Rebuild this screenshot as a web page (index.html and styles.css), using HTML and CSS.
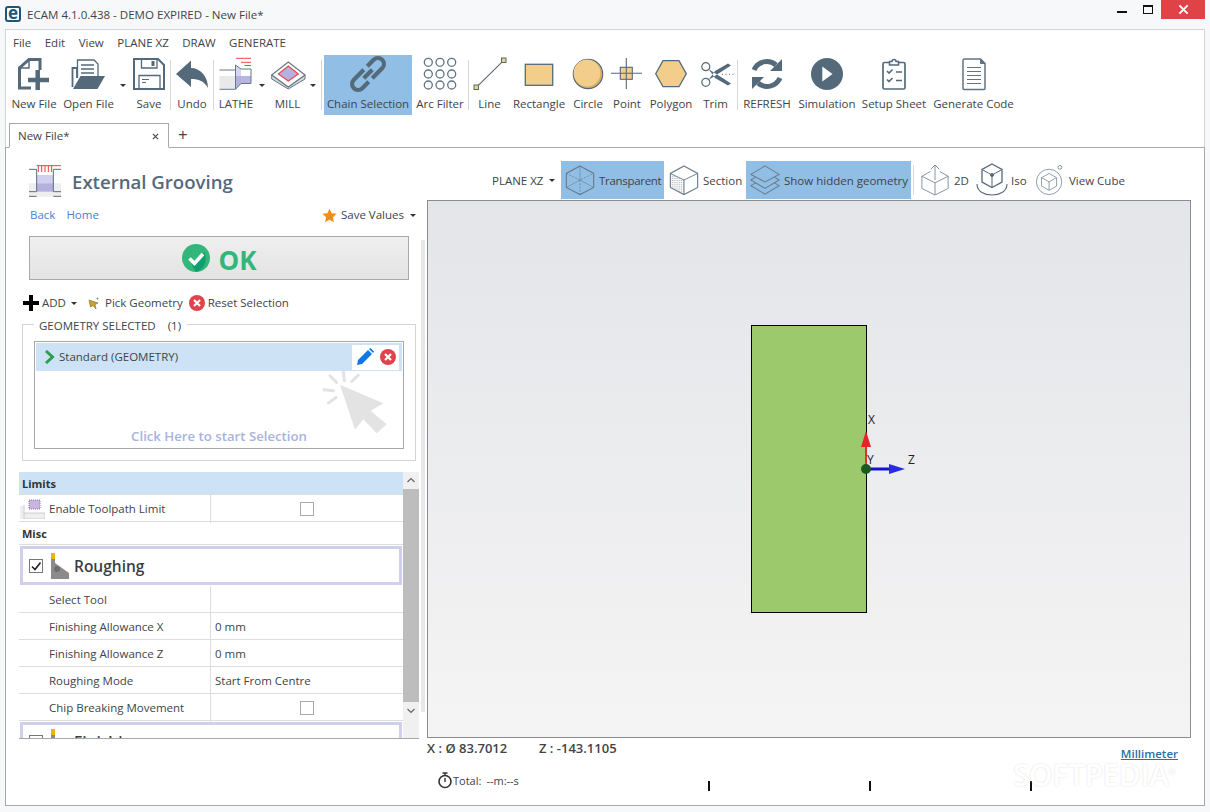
FILE: index.html
```html
<!DOCTYPE html>
<html lang="en">
<head>
<meta charset="utf-8">
<title>ECAM 4.1.0.438 - DEMO EXPIRED - New File*</title>
<link rel="stylesheet" href="styles.css">
</head>
<body>
<header class="titlebar">
  <span class="logo">e</span>
  <span class="apptitle">ECAM 4.1.0.438 - DEMO EXPIRED - New File*</span>
  <div class="winctl">
    <span class="wmin"></span>
    <span class="wmax"></span>
    <span class="wclose"><svg viewBox="0 0 12 12" width="11" height="11"><path d="M1.5 1.5L10.5 10.5M10.5 1.5L1.5 10.5" stroke="#fff" stroke-width="2.2"/></svg></span>
  </div>
</header>
<div class="window">
  <nav class="menu"><span>File</span><span>Edit</span><span>View</span><span>PLANE XZ</span><span>DRAW</span><span>GENERATE</span></nav>
  <div class="toolbar">
    <div class="tool"><svg class="ti" viewBox="0 0 36 36"><path d="M15 32H3.500V12L13 3.500H24V14" fill="none" stroke="#546a7b" stroke-width="3"/><path d="M3.500 12H13V3.500" fill="none" stroke="#546a7b" stroke-width="1.500"/><path d="M21.700 14V34M12 24H33" stroke="#546a7b" stroke-width="4.500"/></svg><span>New File</span></div>
    <div class="tool"><svg class="ti" viewBox="0 0 36 36"><path d="M6.500 22V4H23L27 8V22" fill="#fff" stroke="#546a7b" stroke-width="1.300"/><path d="M10 9H23M10 13H23M10 17H23" stroke="#546a7b" stroke-width="1.300"/><path d="M2 33L9.500 20H34L26.500 33Z" fill="#546a7b"/><path d="M1.500 31V12H6V22" fill="none" stroke="#546a7b" stroke-width="1.800"/></svg><span>Open File</span></div>
    <div class="caretcell"><i class="caret"></i></div>
    <div class="tool"><svg class="ti" viewBox="0 0 36 36"><path d="M3 3H27L33 9V33H3Z" fill="none" stroke="#546a7b" stroke-width="2"/><path d="M10.500 3V12H26V3" fill="none" stroke="#546a7b" stroke-width="1.300"/><rect x="20.500" y="5" width="3" height="5" fill="#546a7b"/><path d="M8 33V19.500H29V33" fill="none" stroke="#546a7b" stroke-width="1.300"/><path d="M11 23.500H18M11 26.500H15" stroke="#546a7b" stroke-width="1.200"/></svg><span>Save</span></div>
    <i class="sep"></i>
    <div class="tool"><svg class="ti" viewBox="0 0 36 36"><path d="M2 18L17 4.500V12C26 12 34 20 34 32C30 25 25 23 17 23V31Z" fill="#546a7b"/></svg><span>Undo</span></div>
    <i class="sep"></i>
    <div class="tool"><svg class="ti" viewBox="0 0 36 36"><rect x="1.500" y="20" width="16" height="13" fill="#e9e9e9"/><path d="M17.500 9L23 13V27.500L17.500 33Z" fill="#d6d4ee"/><path d="M17.500 20H23V27.500L17.500 33Z" fill="#b5b0de"/><rect x="23" y="20" width="10" height="7.500" fill="#b9b5e0"/><path d="M1.500 33.300H17.500L23 27.500H33V13H23L17.500 9V33M1.500 14H17.500" fill="none" stroke="#65788a"/><path d="M18 2.300H33M23 6.300H33M26.500 9.500H33" stroke="#f0474c" stroke-width="1"/></svg><span>LATHE</span></div>
    <div class="caretcell"><i class="caret"></i></div>
    <div class="tool"><svg class="ti" viewBox="0 0 36 36"><path d="M1.700 19V23L18.300 33L35 23V19L18.300 31Z" fill="#d8d8d8" stroke="#65788a"/><path d="M1.700 19L18.300 6L35 19L18.300 31Z" fill="#fff" stroke="#65788a" stroke-width="1.200"/><path d="M8.300 18L18.300 10L28.300 18L18.300 25Z" fill="#b5b0de" stroke="#f0474c" stroke-width="1.200"/></svg><span>MILL</span></div>
    <div class="caretcell"><i class="caret"></i></div>
    <i></i>
    <i class="sep"></i>
    <i></i>
    <div class="tool on"><svg class="ti" viewBox="0 0 36 36"><g transform="rotate(-45 18 18)" fill="none" stroke="#546a7b" stroke-width="4.200"><path d="M18 12H4A6 6 0 0 0 4 24H13"/><path d="M18 24H32A6 6 0 0 0 32 12H23"/><path d="M12 18H24"/></g></svg><span>Chain Selection</span></div>
    <div class="tool"><svg class="ti" viewBox="0 0 36 36" fill="none" stroke="#607483" stroke-width="1.300"><circle cx="6.300" cy="6.300" r="4"/><circle cx="18" cy="6.300" r="4"/><circle cx="29.700" cy="6.300" r="4"/><circle cx="6.300" cy="18" r="4"/><circle cx="18" cy="18" r="4"/><circle cx="29.700" cy="18" r="4"/><circle cx="6.300" cy="29" r="4"/><circle cx="18" cy="29" r="4"/><circle cx="29.700" cy="29" r="4"/></svg><span>Arc Filter</span></div>
    <i class="sep"></i>
    <div class="tool"><svg class="ti" viewBox="0 0 36 36"><path d="M4.300 31.300L31.700 4.300" stroke="#546a7b" stroke-width="1.100"/><rect x="2" y="29" width="4.500" height="4.500" fill="#f3cd8a" stroke="#546a7b"/><rect x="29.500" y="2" width="4.500" height="4.500" fill="#f3cd8a" stroke="#546a7b"/></svg><span>Line</span></div>
    <div class="tool"><svg class="ti" viewBox="0 0 36 36"><rect x="4.300" y="8.300" width="27.400" height="21" fill="#f3cd8a" stroke="#546a7b" stroke-width="1.300"/></svg><span>Rectangle</span></div>
    <div class="tool"><svg class="ti" viewBox="0 0 36 36"><circle cx="18" cy="18" r="14.700" fill="#d9ab6a" stroke="#546a7b" stroke-width="1.200"/><circle cx="17" cy="17" r="13.400" fill="#f3cd8a"/></svg><span>Circle</span></div>
    <div class="tool"><svg class="ti" viewBox="0 0 36 36"><rect x="11.300" y="11.300" width="12" height="12" fill="#f3cd8a"/><path d="M17.300 2V33M2 17.300H33" stroke="#546a7b" stroke-width="1.100"/><rect x="11.300" y="11.300" width="12" height="12" fill="none" stroke="#546a7b" stroke-width="1.100"/></svg><span>Point</span></div>
    <div class="tool"><svg class="ti" viewBox="0 0 36 36"><path d="M2.700 17.700L10 4.700H26L33.300 17.700L26 30.700H10Z" fill="#f3cd8a" stroke="#546a7b" stroke-width="1.300"/></svg><span>Polygon</span></div>
    <div class="tool"><svg class="ti" viewBox="0 0 36 36"><circle cx="7.800" cy="10.700" r="4" fill="none" stroke="#546a7b" stroke-width="1.200"/><circle cx="7.800" cy="26.300" r="4" fill="none" stroke="#546a7b" stroke-width="1.200"/><path d="M10.500 13L33 27.500L30 29.500L17 22ZM10.500 24L33 9.500L30 7.500L17 15Z" fill="#546a7b"/><path d="M24 18.300H37" stroke="#546a7b" stroke-dasharray="1 2.500"/></svg><span>Trim</span></div>
    <i></i>
    <i class="sep"></i>
    <div class="tool"><svg class="ti" viewBox="0 0 36 36"><path d="M5 14A14 14 0 0 1 27 9M31 22A14 14 0 0 1 9 27" fill="none" stroke="#546a7b" stroke-width="5"/><path d="M33 3V15H21ZM3 33V21H15Z" fill="#546a7b"/></svg><span>REFRESH</span></div>
    <div class="tool"><svg class="ti" viewBox="0 0 36 36"><circle cx="18" cy="18" r="16" fill="#546a7b"/><path d="M13.300 10.500V25.500L23.500 18Z" fill="#fff"/></svg><span>Simulation</span></div>
    <div class="tool"><svg class="ti" viewBox="0 0 36 36" fill="none" stroke="#546a7b"><rect x="7" y="6.500" width="22" height="26.500" rx="1.500" stroke-width="1.700"/><path d="M13.500 9V5.500H16A2 2 0 0 1 20 5.500H22.500V9Z" fill="#fff" stroke-width="1.500"/><path d="M11 15L13 17L16.500 13.500M11 23.500L13 25.500L16.500 22M20 16H26M20 24.500H26" stroke-width="1.600"/></svg><span>Setup Sheet</span></div>
    <div class="tool"><svg class="ti" viewBox="0 0 36 36" fill="none" stroke="#607483"><path d="M8.500 3H24.500L29 7.500V32.500A1 1 0 0 1 28 33.500H8A1 1 0 0 1 7 32.500V4.500A1.500 1.500 0 0 1 8.500 3Z" stroke-width="1.500"/><path d="M24.500 3V7.500H29Z" fill="#607483"/><path d="M11 11.500H25M11 15.500H25M11 19.500H25M11 23.500H25M11 27.500H25" stroke-width="1.200"/></svg><span>Generate Code</span></div>
  </div>
  <div class="tabs">
    <div class="tab"><span>New File*</span><svg viewBox="0 0 8 8" width="7" height="7"><path d="M1 1L7 7M7 1L1 7" stroke="#444" stroke-width="1.300"/></svg></div>
    <span class="newtab">+</span>
  </div>
  <main class="doc">
    <section class="left">
      <div class="outerscroll"></div>
      <div class="heading">
        <svg viewBox="87 45 96 96" width="32" height="32"><rect x="87" y="100" width="96" height="40" fill="#eeeeee"/><rect x="110" y="75" width="50" height="26" fill="#d0cfec"/><rect x="110" y="100" width="50" height="25" fill="#b5b0de"/><path d="M87 58H110V125H87M183 58H160V125H183M87 139H110M160 139H183" fill="none" stroke="#5a6e7e" stroke-width="3"/><path d="M110 47H183M115 47V66M125 47V66M135 47V66M145 47V66M155 47V66" fill="none" stroke="#ef3d45" stroke-width="3"/></svg>
        <h1>External Grooving</h1>
      </div>
      <div class="links">
        <a>Back</a><a>Home</a>
        <div class="savevals">
          <svg viewBox="0 0 24 24" width="15" height="15"><path d="M12 1L15.400 8.300L23.300 9.300L17.500 14.800L19 22.700L12 18.800L5 22.700L6.500 14.800L.7 9.300L8.600 8.300Z" fill="#f28c1c"/></svg>
          <span>Save Values</span><i class="caret"></i>
        </div>
      </div>
      <button class="okbtn">
        <svg viewBox="0 0 28 28" width="28" height="28"><circle cx="14" cy="14" r="14" fill="#33b67a"/><path d="M10 21L22 8A14 14 0 0 1 14 28Z" fill="#0f9f6e"/><path d="M7.500 14.500L12.500 19.500L21 10" fill="none" stroke="#fff" stroke-width="3.600"/></svg>
        <span>OK</span>
      </button>
      <div class="actions">
        <svg class="aplus" viewBox="0 0 16 16" width="16" height="16"><path d="M8 0V16M0 8H16" stroke="#000" stroke-width="4"/></svg>
        <span class="aadd">ADD</span><i class="caret"></i>
        <svg class="apick" viewBox="0 0 12 13" width="12" height="13"><path d="M1 3L10 6L7 7.500L8 12L5 8.500L2.500 10Z" fill="#c9a227" stroke="#7a6a30" stroke-width=".6"/><path d="M9.500 0V3M8 1.500H11" stroke="#999" stroke-width=".7"/></svg>
        <span>Pick Geometry</span>
        <svg class="areset" viewBox="0 0 16 16" width="16" height="16"><circle cx="8" cy="8" r="8" fill="#e0434b"/><path d="M5 5L11 11M11 5L5 11" stroke="#fff" stroke-width="2.200"/></svg>
        <span>Reset Selection</span>
      </div>
      <fieldset class="geom">
        <legend><span>GEOMETRY SELECTED</span><span class="count">(1)</span></legend>
        <div class="selbox">
          <div class="selrow">
            <svg viewBox="0 0 11 14" width="11" height="14"><path d="M2 1L8.500 7L2 13" fill="none" stroke="#2e9e50" stroke-width="3"/></svg>
            <span>Standard (GEOMETRY)</span>
            <div class="selacts">
              <svg viewBox="0 0 18 18" width="18" height="18"><path d="M1 17L2 12L12 2L16 6L6 16Z M13 1L14.500 0L18 3.500L17 5Z" fill="#0a78e6"/></svg>
              <svg viewBox="0 0 16 16" width="16" height="16"><circle cx="8" cy="8" r="8" fill="#e0434b"/><path d="M5 5L11 11M11 5L5 11" stroke="#fff" stroke-width="2.200"/></svg>
            </div>
          </div>
          <svg class="cursorart" viewBox="960 160 210 200"><path d="M1020 207L1150 262L1112 285L1160 325L1130 352L1090 310L1065 342Z" fill="#e3e3e3"/><path d="M1030 165L1033 195M1075 178L1055 197M972 222L1000 225M985 262L1008 245M990 180L1010 200" stroke="#e3e3e3" stroke-width="9" stroke-linecap="round"/></svg>
          <div class="clickhere">Click Here to start Selection</div>
        </div>
      </fieldset>
      <div class="propgrid">
        <div class="rows">
          <div class="group blue">Limits</div>
          <div class="row">
            <div class="lab"><svg class="limicon" viewBox="0 0 25 20" width="25" height="20"><rect x="0" y="7" width="4" height="13" fill="#eee"/><path d="M4 6V20M4 14H25V20H4" fill="#eee" stroke="#c4c4c4" stroke-width=".8"/><rect x="9" y="1" width="11" height="9" fill="#c7b5dd" stroke="#8a70b0" stroke-dasharray="1 1"/></svg>Enable Toolpath Limit</div>
            <div class="val center"><i class="chk"></i></div>
          </div>
          <div class="group">Misc</div>
          <div class="section">
            <i class="chk big on"><svg viewBox="0 0 12 12" width="12" height="12"><path d="M2 6.500L5 9.500L10.500 2.500" fill="none" stroke="#222" stroke-width="1.600"/></svg></i>
            <svg class="toolic" viewBox="0 0 18 26" width="18" height="26"><rect x="0" y="0" width="4" height="6" fill="#e7b800"/><path d="M0 6H4V10L18 20V26H0Z" fill="#8b8b8b"/><circle cx="6" cy="16" r="3" fill="#6e6e6e"/></svg>
            <span>Roughing</span>
          </div>
          <div class="row"><div class="lab">Select Tool</div><div class="val"></div></div>
          <div class="row"><div class="lab">Finishing Allowance X</div><div class="val">0 mm</div></div>
          <div class="row"><div class="lab">Finishing Allowance Z</div><div class="val">0 mm</div></div>
          <div class="row"><div class="lab">Roughing Mode</div><div class="val">Start From Centre</div></div>
          <div class="row"><div class="lab">Chip Breaking Movement</div><div class="val center"><i class="chk"></i></div></div>
          <div class="section">
            <i class="chk big"></i>
            <svg class="toolic" viewBox="0 0 18 26" width="18" height="26"><rect x="0" y="0" width="4" height="6" fill="#e7b800"/><path d="M0 6H4V10L18 20V26H0Z" fill="#8b8b8b"/></svg>
            <span>Finishing</span>
          </div>
        </div>
        <div class="vscroll">
          <svg viewBox="0 0 16 17" width="16" height="17"><path d="M4.500 10L8 6.500L11.500 10" fill="none" stroke="#666" stroke-width="1.200"/></svg>
          <div class="thumb"></div>
          <svg viewBox="0 0 16 17" width="16" height="17"><path d="M4.500 7L8 10.500L11.500 7" fill="none" stroke="#666" stroke-width="1.200"/></svg>
        </div>
      </div>
    </section>
    <section class="right">
      <div class="viewbar">
        <div class="vb plane"><span>PLANE XZ</span><i class="caret"></i></div>
        <div class="vb on wt"><svg class="vi" viewBox="0 0 34 36" fill="none" stroke="#6a7d8c"><path d="M17 3L31.500 11V26L17 33.500L2.500 26V11Z" stroke-width="1.200"/><path d="M2.500 11L17 18L31.500 11M17 18V33.500" stroke-width=".8" stroke-dasharray="2 1.500"/><path d="M2.500 26L17 18M31.500 26L17 18M17 3V18" stroke-width=".6"/></svg><span>Transparent</span></div>
        <div class="vb ws"><svg class="vi" viewBox="0 0 34 36" fill="none" stroke="#6a7d8c"><defs><pattern id="dots" width="2" height="2" patternUnits="userSpaceOnUse"><rect width="1" height="1" fill="#9aa5ae" stroke="none"/></pattern></defs><path d="M2.500 11L17 18V33.500L2.500 26Z" fill="url(#dots)" stroke="none"/><path d="M17 3L31.500 11V26L17 33.500L2.500 26V11Z" stroke-width="1.200"/><path d="M2.500 11L17 18L31.500 11M17 18V33.500" stroke-width="1"/></svg><span>Section</span></div>
        <div class="vb on wh"><svg class="vi" viewBox="0 0 34 36" fill="none" stroke="#6a7d8c" stroke-width="1.100"><path d="M17 3L32 12L17 20L2 12Z"/><path d="M7 15L2 18L17 27L32 18L27 15"/><path d="M7 21L2 24L17 33L32 24L27 21"/></svg><span>Show hidden geometry</span></div>
        <i class="vsep"></i>
        <div class="vb w2"><svg class="vi" viewBox="0 0 32 36" fill="none" stroke="#7d8e9b" stroke-width="1"><path d="M11 9L2 14V27L16 34L30 27V14L21 9"/><path d="M2 14L16 21L30 14M16 21V34"/><path d="M16 18V2M11.500 6.500L16 2L20.500 6.500"/></svg><span>2D</span></div>
        <div class="vb wi"><svg class="vi iso" viewBox="0 0 34 36" fill="none" stroke="#56697a"><path d="M17 2L27 7.500V20L17 25.500L7 20V7.500Z" stroke-width="1.300"/><path d="M7 7.500L17 13L27 7.500M17 13V25.500" stroke-width="1"/><path d="M2 22C2 30 10 33 17 33C24 33 32 30 32 22" stroke-width="1.100"/><circle cx="17" cy="13" r="1.500" fill="#56697a"/></svg><span>Iso</span></div>
        <div class="vb wc"><svg class="vi" viewBox="0 0 32 36" fill="none" stroke="#7d8e9b"><circle cx="15" cy="20" r="13.500" stroke-width=".9"/><path d="M15 11L23 15.500V24.500L15 29L7 24.500V15.500ZM7 15.500L15 20L23 15.500M15 20V29" stroke-width=".9"/><circle cx="26.500" cy="4.500" r="2" stroke-width="1"/></svg><span>View Cube</span></div>
      </div>
      <div class="viewport">
        <div class="part"></div>
        <svg class="axes" viewBox="0 0 60 70" width="60" height="70"><path d="M18 50V20" stroke="#e03030" stroke-width="2"/><path d="M18 12L13 28H23Z" fill="#e8242a"/><path d="M18 50H45" stroke="#1212d0" stroke-width="3"/><path d="M57 50L41 45V55Z" fill="#2b2bde"/><circle cx="18" cy="50" r="5" fill="#1d5a23"/></svg>
        <span class="axl ax">X</span><span class="axl ay">Y</span><span class="axl az">Z</span>
      </div>
      <div class="status">
        <div class="coords">
          <b class="cx">X : Ø 83.7012</b><b>Z : -143.1105</b>
          <a class="unit">Millimeter</a>
        </div>
        <div class="timing">
          <div class="timer">
            <svg viewBox="0 0 16 17" width="16" height="17"><circle cx="8" cy="9.500" r="6" fill="none" stroke="#333" stroke-width="1.600"/><path d="M5.500 1H10.500M8 1V3.500M8 6V10" stroke="#333" stroke-width="1.400"/></svg>
            <span class="tot">Total:</span><span>--m:--s</span>
          </div>
          <i class="tick"></i><i class="tick"></i><i class="tick"></i>
        </div>
      </div>
    </section>
  </main>
</div>
<div class="softpedia">SOFTPEDIA<sup>®</sup></div>
</body>
</html>
```
FILE: styles.css
```css
* { box-sizing: border-box; }
html, body { margin: 0; height: 812px; overflow: hidden; }
body {
  background: #f7f8f9;
  font: 11.5px/16px "Open Sans", "Noto Sans", sans-serif;
  color: #404448;
  display: flex;
  flex-direction: column;
  position: relative;
}
i { font-style: normal; display: block; }

.titlebar { height: 29px; display: flex; align-items: flex-start; flex: none; }
.logo {
  margin: 6px 0 0 5px; width: 16px; height: 16px; border: 2px solid #1f5575; border-radius: 3px;
  font: bold 17px/10px "Open Sans", sans-serif; color: #1f5575; text-align: center; background: #fff;
}
.apptitle { margin: 7px 0 0 6px; font-size: 11.55px; color: #404448; }
.winctl { margin-left: auto; margin-right: 5px; display: flex; align-items: flex-start; }
.wmin { width: 10px; height: 2px; background: #111; margin-top: 11px; }
.wmax { width: 10px; height: 9px; border: 1px solid #111; border-top-width: 2px; margin: 5px 0 0 16px; }
.wclose { width: 44px; height: 19px; background: #e04347; margin-left: 8px; display: flex; align-items: center; justify-content: center; }

.window {
  flex: 1; margin: 0 5px 6px; border: 1px solid #d4d4d4; border-bottom: 0; background: #fff;
  display: flex; flex-direction: column; min-height: 0;
}
.menu { height: 25px; padding: 5px 0 0 7px; display: flex; gap: 13.5px; flex: none; }

.toolbar {
  height: 60px; flex: none; padding-left: 3px; display: grid;
  grid-template-columns: 50px 59px 10px 42px 1px 42px 1px 44px 8px 43px 8px 4px 1px 2px 88px 56px 1px 41px 58px 40px 38px 50px 39px 2px 1px 58px 62px 72px 87px;
}
.tool { display: flex; flex-direction: column; align-items: center; white-space: nowrap; padding-top: 1px; }
.tool span { margin-top: 4px; line-height: 16px; margin-left: -6px; margin-right: -6px; }
.tool.on { background: #90bee5; }
.ti { width: 36px; height: 36px; flex: none; overflow: visible; }
.sep { width: 1px; height: 50px; margin-top: 5px; background: #d8d8d8; }
.caretcell { padding-top: 29px; display: flex; justify-content: center; }
.caret { width: 0; height: 0; border: 3px solid transparent; border-top: 3px solid #333; border-bottom: 0; flex: none; }

.tabs { height: 33px; flex: none; display: flex; align-items: flex-end; padding-left: 3px; position: relative; z-index: 1; margin-bottom: -1px; }
.tab {
  width: 160px; height: 25px; border: 1px solid #a8a8a8; border-bottom: 1px solid #fff; background: #fff;
  display: flex; align-items: center; justify-content: space-between; padding: 1px 9px 0 8px;
}
.newtab { font-size: 17px; line-height: 24px; margin-left: 9px; height: 25px; color: #444; }

.doc { flex: 1; min-height: 0; border: 1px solid #a8a8a8; margin: 0 -1px 0 -1px; display: flex; }
.left { width: 421px; flex: none; position: relative; padding-top: 17px; }
.outerscroll { position: absolute; left: 415px; top: 92px; width: 4px; height: 472px; background: #e8e8e8; }
.heading { margin-left: 23px; height: 32px; display: flex; align-items: center; gap: 11px; }
.heading h1 { margin: 2px 0 0; font: 600 18.6px/32px "Open Sans", sans-serif; color: #546a7b; }
.links { margin: 10px 0 0 24px; height: 16px; display: flex; gap: 11px; width: 386px; }
.links a { color: #4a7fd6; }
.savevals { margin-left: auto; display: flex; align-items: center; gap: 4px; }
.savevals span { margin-right: 2px; }
.okbtn {
  display: flex; align-items: center; justify-content: center; gap: 9px; margin: 13px 0 0 23px; width: 380px; height: 44px;
  border: 1px solid #a8a8a8; background: linear-gradient(#efefef, #e3e3e3); padding: 0;
}
.okbtn span { font: bold 26px/30px "Open Sans", sans-serif; color: #33b67a; padding-top: 4px; }
.actions { margin: 13px 0 0 17px; height: 20px; display: flex; align-items: center; white-space: nowrap; }
.aadd { margin: 0 5px 0 3px; }
.apick { margin: 0 5px 0 11px; }
.areset { margin: 0 3px 0 6px; }
.geom { margin: 1px 0 0 16px; width: 394px; height: 147px; border: 1px solid #d4d4d4; padding: 0 11px; min-inline-size: 0; }
.geom legend { padding: 4px 6px 0 5px; line-height: 16px; white-space: nowrap; }
.count { margin-left: 12px; }
.selbox { margin-top: 7px; height: 108px; border: 1px solid #a8a8a8; padding: 1px; position: relative; overflow: hidden; }
.selrow { height: 28px; background: #cde3f5; display: flex; align-items: center; padding-left: 8px; gap: 4px; position: relative; z-index: 1; }
.selacts { margin-left: auto; margin-right: 3px; width: 47px; height: 25px; background: #fff; display: flex; align-items: center; gap: 6px; padding-left: 4px; }
.cursorart { position: absolute; left: 285px; top: 27px; width: 70px; height: 67px; }
.clickhere { position: absolute; left: 0; right: 0; top: 85px; text-align: center; font: 600 13.2px/18px "Open Sans", sans-serif; color: #a7b3dc; }

.propgrid { margin: 11px 0 0 13px; width: 400px; height: 267px; border-bottom: 1px solid #a8a8a8; display: flex; overflow: hidden; }
.rows { width: 384px; flex: none; }
.group { height: 23px; padding-left: 3px; font-weight: 700; line-height: 24px; font-size: 11px; border-bottom: 1px solid #ddd; color: #333; }
.group.blue { background: #cde3f5; }
.row { height: 27px; display: grid; grid-template-columns: 192px 1fr; border-bottom: 1px solid #ddd; line-height: 28px; white-space: nowrap; }
.lab { padding-left: 30px; border-right: 1px solid #ddd; position: relative; }
.limicon { position: absolute; left: 1px; top: 4px; }
.val { padding-left: 4px; }
.val.center { display: flex; align-items: center; justify-content: center; padding: 0; }
.chk { width: 14px; height: 14px; border: 1px solid #aaa; background: #fff; flex: none; }
.chk.big { border-color: #777; display: flex; align-items: center; justify-content: center; }
.section {
  height: 39px; margin: 1px; border: 3px solid #d0d0ee; display: flex; align-items: center;
  font: 600 15.5px/22px "Open Sans", sans-serif; color: #3a3f44; padding-left: 6px;
}
.toolic { margin: 0 5px 0 8px; }
.vscroll { width: 16px; background: #f0f0f0; display: flex; flex-direction: column; }
.vscroll svg { flex: none; }
.thumb { background: #bdbdbd; height: 213px; flex: none; }

.right { flex: 1; min-width: 0; display: flex; flex-direction: column; padding-right: 13px; }
.viewbar { height: 52px; padding: 13px 0 0 65px; display: flex; flex: none; }
.vb { height: 38px; display: flex; align-items: center; gap: 3px; white-space: nowrap; flex: none; }
.vb span { padding-top: 2px; }
.vb.on { background: #90bee5; }
.plane { width: 69px; gap: 6px; }
.vi { width: 32px; height: 36px; flex: none; }
.wt { width: 103px; padding-left: 3px; }
.wt span { letter-spacing: -.3px; }
.ws { width: 82px; padding-left: 4px; }
.wh { width: 165px; padding-left: 3px; }
.vsep { width: 1px; height: 30px; margin: 4px 0 0 2px; background: #d8d8d8; }
.w2 { width: 55px; margin-left: 6px; gap: 4px; }
.w2 .vi { width: 30px; }
.wi { width: 60px; gap: 2px; }
.wi .iso { width: 34px; }
.wc .vi { width: 30px; }
.wc { gap: 4px; }

.viewport {
  height: 538px; flex: none; border: 1px solid #8c8c8c; background: linear-gradient(#e4e5e9, #f4f4f4);
  display: flex; align-items: flex-start; position: relative;
}
.part { width: 116px; height: 288px; margin: 124px 0 0 323px; background: #9dc96d; border: 1px solid #000; }
.axes { position: absolute; left: 420px; top: 218px; }
.axl { position: absolute; font-size: 12px; line-height: 14px; color: #222; }
.ax { left: 440px; top: 212px; }
.ay { left: 439px; top: 252px; }
.az { left: 480px; top: 252px; }

.status { flex: 1; display: flex; flex-direction: column; }
.coords { height: 33px; display: flex; align-items: flex-start; font-size: 13px; padding-top: 2px; }
.coords b { font-weight: 600; color: #444; line-height: 16px; }
.cx { width: 112px; }
.unit { margin-left: auto; margin-top: 6px; margin-right: 13px; font-size: 11.5px; font-weight: 600; color: #2a6fa8; text-decoration: underline; }
.timing { display: flex; align-items: flex-start; }
.timer { width: 281px; padding-left: 10px; display: flex; align-items: center; font-size: 11px; height: 17px; margin-top: 1px; }
.tot { margin: 0 5px 0 0; }
.tick { width: 2px; height: 10px; margin-top: 10px; margin-right: 159px; background: #111; flex: none; }

.softpedia {
  position: absolute; left: 1013px; top: 763px; font: 600 30px/24px "Open Sans", sans-serif; color: #fff;
  letter-spacing: -.4px; text-shadow: 0 0 2px #dcdcdc; white-space: nowrap;
}
.softpedia sup { font-size: 9px; line-height: 0; }
```
